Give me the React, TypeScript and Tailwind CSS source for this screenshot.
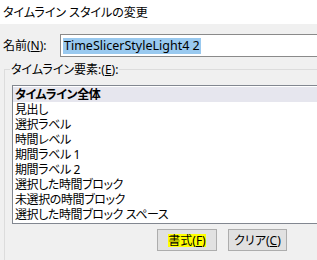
import React from "react";

const items = [
  "タイムライン全体",
  "見出し",
  "選択ラベル",
  "時間レベル",
  "期間ラベル 1",
  "期間ラベル 2",
  "選択した時間ブロック",
  "未選択の時間ブロック",
  "選択した時間ブロック スペース",
];

export default function App() {
  return (
    <div
      className="w-[317px] h-[260px] overflow-hidden bg-[#f0f0f0] text-black text-[12px] leading-[15px] [font-feature-settings:'palt']"
      style={{ fontFamily: '"Noto Sans", "Noto Sans CJK JP", sans-serif' }}
    >
      <div className="h-[24px] bg-white pl-[3px] flex items-center text-[12px]">
        タイムライン スタイルの変更
      </div>
      <div className="flex items-center mt-[10px] h-[23px]">
        <span className="ml-[3px] w-[57px] shrink-0">
          名前(<span className="underline">N</span>):
        </span>
        <div className="w-[300px] shrink-0 h-[23px] border border-[#8a8a8a] bg-white flex items-center pl-[2px]">
          <span className="bg-[#99c9ef] leading-[16px] px-[1px] text-[12.5px]">TimeSlicerStyleLight4 2</span>
        </div>
      </div>
      <div className="ml-[4px] mt-[12px] w-[400px] h-[200px] border-l border-t border-[#dcdcdc] relative">
        <span className="absolute -top-[8px] left-[5px] px-[1px] bg-[#f0f0f0]">
          タイムライン要素:(<span className="underline">E</span>):
        </span>
        <div className="ml-[7px] mt-[15px] w-[400px] h-[139px] border border-[#828790] bg-white pt-[1px]">
          {items.map((t, i) => (
            <div
              key={t}
              className={
                "h-[15px] pl-[2px] whitespace-nowrap tracking-[-0.4px] " +
                (i === 0 ? "font-bold bg-[#e6e6ee]" : "")
              }
            >
              {t}
            </div>
          ))}
        </div>
        <div className="flex mt-[5px] ml-[152px] gap-[11px]">
          <div className="w-[60px] h-[22px] bg-[#e1e1e1] border border-[#adadad] flex items-center justify-center">
            <span className="bg-[#ffff00] leading-[13px]">
              書式(<span className="underline">F</span>)
            </span>
          </div>
          <div className="w-[59px] h-[22px] bg-[#e1e1e1] border border-[#adadad] flex items-center justify-center">
            <span className="leading-[13px]">
              クリア(<span className="underline">C</span>)
            </span>
          </div>
        </div>
      </div>
    </div>
  );
}
